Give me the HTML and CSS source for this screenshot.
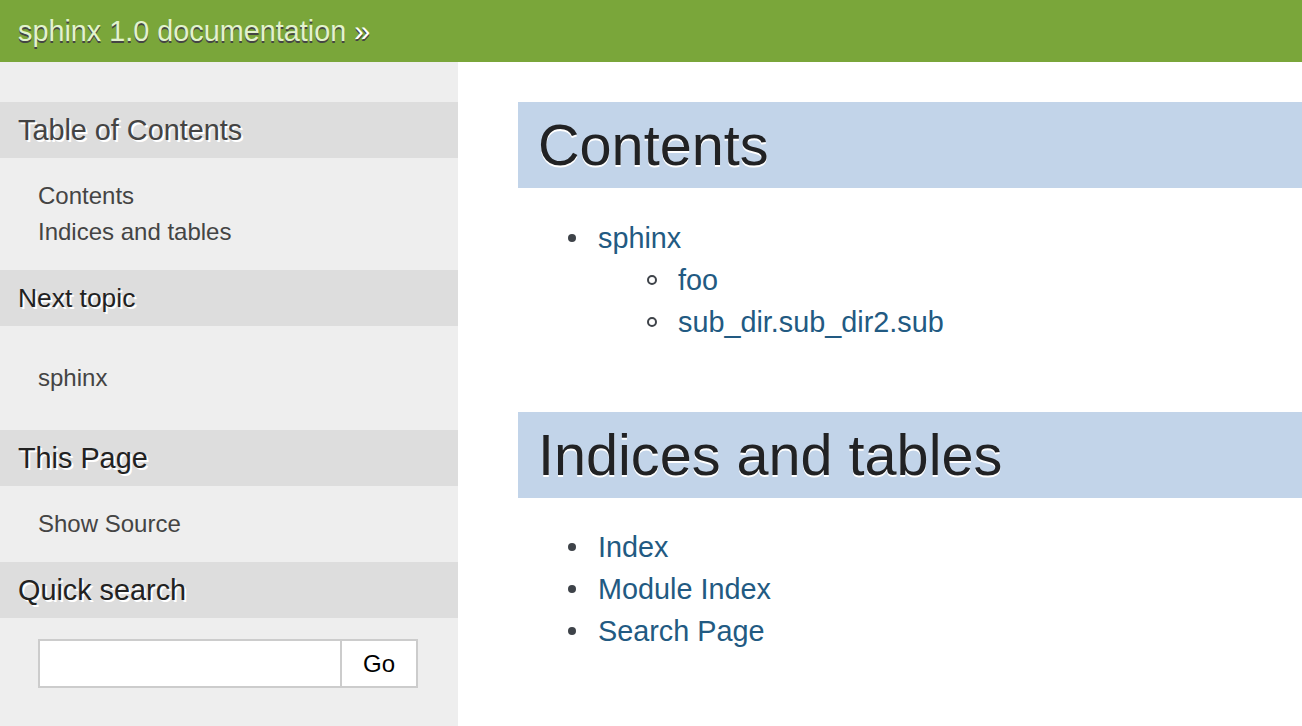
FILE: index.html
```html
<!DOCTYPE html>
<html>
<head>
<meta charset="utf-8">
<title>Contents — sphinx 1.0 documentation</title>
<link rel="stylesheet" href="styles.css">
</head>
<body>
<div class="related">
  <a class="home" href="#">sphinx 1.0 documentation</a> <span class="sep">»</span>
</div>
<div class="document">
  <aside class="sidebar">
    <h3 class="side-h"><a href="#">Table of Contents</a></h3>
    <ul class="side-list">
      <li><a href="#">Contents</a></li>
      <li><a href="#">Indices and tables</a></li>
    </ul>
    <h4 class="side-h side-h4">Next topic</h4>
    <p class="topless"><a href="#">sphinx</a></p>
    <h3 class="side-h">This Page</h3>
    <ul class="side-list">
      <li><a href="#">Show Source</a></li>
    </ul>
    <h3 class="side-h">Quick search</h3>
    <form class="search">
      <input class="search-text" type="text" name="q">
      <input class="search-go" type="submit" value="Go">
    </form>
  </aside>
  <main class="body">
    <section class="section">
      <h1 class="title">Contents</h1>
      <ul class="toc">
        <li><a href="#">sphinx</a>
          <ul class="toc-sub">
            <li><a href="#">foo</a></li>
            <li><a href="#">sub_dir.sub_dir2.sub</a></li>
          </ul>
        </li>
      </ul>
    </section>
    <section class="section">
      <h1 class="title">Indices and tables</h1>
      <ul class="toc">
        <li><a href="#">Index</a></li>
        <li><a href="#">Module Index</a></li>
        <li><a href="#">Search Page</a></li>
      </ul>
    </section>
  </main>
</div>
</body>
</html>
```
FILE: styles.css
```css
html, body {
  margin: 0;
  padding: 0;
}
body {
  font-family: "Liberation Sans", Arial, sans-serif;
  font-size: 32px;
  color: #555;
  background: #fff;
}
a {
  text-decoration: none;
}
.related {
  background-color: #7aa63a;
  height: 62px;
  line-height: 62px;
  font-size: 28.8px;
  color: #fff;
  text-shadow: 0 2px 0 #444;
  padding-left: 18px;
}
.related .home {
  color: #e2f3cc;
}
.document {
  display: flex;
  min-height: 664px;
  background: #eee;
}
.sidebar {
  width: 458px;
  flex: 0 0 458px;
  background: #eee;
  padding: 40px 0;
  font-size: 24px;
  line-height: 36px;
  box-sizing: border-box;
}
.side-h {
  margin: 0;
  padding: 10px 18px;
  background: #ddd;
  color: #222;
  font-weight: normal;
  font-size: 28.8px;
  line-height: 36px;
  text-shadow: 2px 2px 0 #fff;
}
.side-h4 {
  font-size: 26.4px;
}
.side-h a {
  color: #444;
}
.side-list {
  list-style: none;
  margin: 20px 38px;
  padding: 0;
}
.sidebar a {
  color: #444;
}
.topless {
  margin: 24px 0;
  padding: 10px 38px;
}
.search {
  display: flex;
  margin: 21px 40px 0 38px;
}
.search-text, .search-go {
  height: 49px;
  box-sizing: border-box;
  border: 2px solid #ccc;
  background: #fff;
  font-family: "Liberation Sans", Arial, sans-serif;
  font-size: 24px;
  padding: 6px;
  margin: 0;
  border-radius: 0;
  outline: none;
}
.search-text {
  width: 80%;
}
.search-go {
  width: 20%;
  border-left: none;
  color: #000;
  -webkit-appearance: none;
  appearance: none;
}
.body {
  flex: 1;
  background: #fff;
  padding: 0 0 60px 60px;
  font-size: 28.8px;
  color: #3e4349;
}
.title {
  margin: 0 0 20px 0;
  border-top: 40px solid #fff;
  background: #c2d4e9;
  color: #212224;
  font-weight: normal;
  font-size: 57.6px;
  line-height: 66px;
  padding: 10px 0 10px 20px;
  text-shadow: 0 2px 0 #fff;
}
.toc {
  margin: 28.8px 0;
  padding-left: 80px;
  line-height: 42px;
  list-style: none;
}
.toc li {
  position: relative;
}
.toc li::before {
  content: "";
  position: absolute;
  left: -30px;
  top: 17px;
  width: 8px;
  height: 8px;
  border-radius: 50%;
  background: #3e4349;
}
.toc-sub {
  margin: 0;
  padding-left: 80px;
  list-style: none;
}
.toc .toc-sub li::before {
  left: -31px;
  top: 16px;
  width: 10px;
  height: 10px;
  box-sizing: border-box;
  background: transparent;
  border: 2px solid #3e4349;
}
.toc a {
  color: #225a82;
}
```
